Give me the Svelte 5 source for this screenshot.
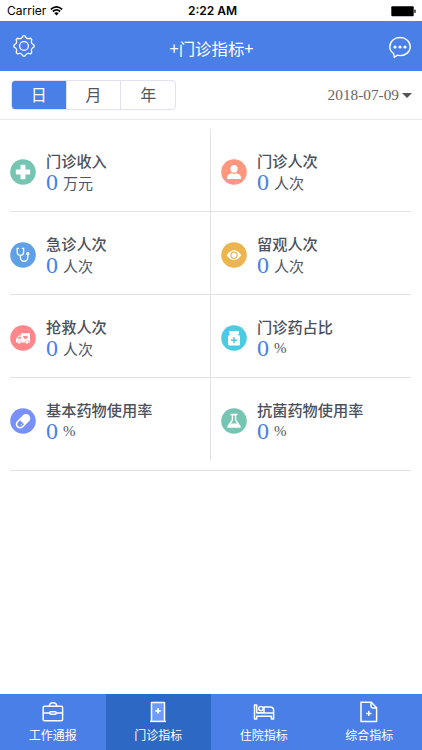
<script>
  const metrics = [
    { label: '门诊收入', unit: '万元', color: '#76c5b3', icon: 'plus' },
    { label: '门诊人次', unit: '人次', color: '#ff977f', icon: 'person' },
    { label: '急诊人次', unit: '人次', color: '#5fa1e8', icon: 'stethoscope' },
    { label: '留观人次', unit: '人次', color: '#edb54f', icon: 'eye' },
    { label: '抢救人次', unit: '人次', color: '#ff868b', icon: 'ambulance' },
    { label: '门诊药占比', unit: '%', color: '#4acbe2', icon: 'bottle' },
    { label: '基本药物使用率', unit: '%', color: '#7790fc', icon: 'pill' },
    { label: '抗菌药物使用率', unit: '%', color: '#76c5b3', icon: 'flask' }
  ];
  const periods = ['日', '月', '年'];
  const tabs = [
    { label: '工作通报', icon: 'case' },
    { label: '门诊指标', icon: 'door' },
    { label: '住院指标', icon: 'bed' },
    { label: '综合指标', icon: 'file' }
  ];
  let period = $state('日');
  let active = $state('门诊指标');

  // Outline of the eight-toothed gear, centred on 12,12.
  const teeth = Array.from({ length: 8 }, (_, i) => {
    const at = (r, deg) => {
      const a = ((i * 45 + deg) * Math.PI) / 180;
      return `${(12 + r * Math.sin(a)).toFixed(2)} ${(12 - r * Math.cos(a)).toFixed(2)}`;
    };
    return `${i ? 'L' : 'M'}${at(10.1, -5)}L${at(10.1, 5)}L${at(8.8, 13)}Q${at(7.6, 22.5)} ${at(8.8, 32)}`;
  }).join('') + 'Z';
</script>

<div class="app">
  <div class="status">
    <div class="carrier">
      <span>Carrier</span>
      <svg width="13" height="10" viewBox="0 0 13 10" fill="none" stroke="#000" stroke-width="1.7">
        <path d="M.8 3.3Q6.5-1.5 12.2 3.3M2.8 5.5Q6.5 2.4 10.2 5.5" />
        <path d="M4.2 7.1Q6.5 5.3 8.8 7.1L6.5 9.5Z" fill="#000" stroke="none" />
      </svg>
    </div>
    <b>2:22 AM</b>
    <div class="power">
      <svg width="25" height="11" viewBox="0 0 25 11">
        <rect x=".3" y=".3" width="22.4" height="10" rx="1" />
        <path d="M23.4 3.5h.6q.6 0 .6.8v2q0 .8-.6.8h-.6z" />
      </svg>
    </div>
  </div>

  <header>
    <svg class="gear" width="24" height="24" viewBox="0 0 24 24" fill="none" stroke="#fff" stroke-width="1.3" stroke-linejoin="round">
      <path d={teeth} />
      <circle cx="12" cy="12" r="4.4" />
    </svg>
    <h1>+门诊指标+</h1>
    <svg class="chat" width="24" height="24" viewBox="0 0 24 24" fill="none" stroke="#fff" stroke-width="1.4" stroke-linejoin="round">
      <path d="M5.6 18.5C3.2 16.8 1.8 14.5 1.8 11.7C1.8 6.5 6.2 2.5 12 2.5S22.2 6.5 22.2 11.7S17.7 20.6 12 20.6Q10.6 20.6 9.3 20.2L6.3 22.4Z" />
      <g fill="#fff" stroke="none"><circle cx="7" cy="12" r="1.6" /><circle cx="12" cy="12" r="1.6" /><circle cx="17" cy="12" r="1.6" /></g>
    </svg>
  </header>

  <div class="filter">
    <div class="segments">
      {#each periods as p}
        <button class:on={p === period} onclick={() => (period = p)}>{p}</button>
      {/each}
    </div>
    <div class="date"><span>2018-07-09</span><i></i></div>
  </div>

  <main>
    {#each metrics as m}
      <section class="cell">
        <svg class="badge" width="26" height="26" viewBox="0 0 26 26">
          <circle cx="13" cy="13" r="12.8" fill={m.color} />
          {#if m.icon === 'plus'}
            <path d="M11.4 5.8h3.2q.9 0 .9.9v3.8h3.8q.9 0 .9.9v3.2q0 .9-.9.9h-3.8v3.8q0 .9-.9.9h-3.2q-.9 0-.9-.9v-3.8H6.7q-.9 0-.9-.9v-3.2q0-.9.9-.9h3.8V6.7q0-.9.9-.9z" fill="#fff" />
          {:else if m.icon === 'person'}
            <ellipse cx="13" cy="9.8" rx="3.6" ry="3.9" fill="#fff" />
            <path d="M6 20v-1.7c0-2.3 2.5-3.7 4.7-4q2.3 1.3 4.6 0c2.2.3 4.7 1.7 4.7 4V20z" fill="#fff" />
          {:else if m.icon === 'stethoscope'}
            <g fill="none" stroke="#fff" stroke-width="1.3" stroke-linecap="round">
              <path d="M8.4 6.4H7.2v3.7a3.2 3.2 0 0 0 6.4 0V6.4h-1.2M10.4 13.4v2.2a3.7 3.7 0 0 0 7.4 0v-2.7" />
              <circle cx="17.8" cy="11.7" r="1" />
            </g>
          {:else if m.icon === 'eye'}
            <path d="M5.7 13.2Q9 8.3 13 8.3t7.3 4.9Q17 18.1 13 18.1t-7.3-4.9z" fill="#fff" />
            <circle cx="13" cy="13.2" r="3.1" fill="#fff" stroke={m.color} stroke-width="1.2" />
          {:else if m.icon === 'ambulance'}
            <path d="M11 8.2h9v9.3H6v-3.4l2.8-3.5H11z" fill="#fff" />
            <path d="M7.5 13.7l1.7-2.1h1.6v2.1zM15.5 14.6l-2.1-2c-.9-1.1.4-2.4 1.5-1.5l.6.5.6-.5c1.1-.9 2.4.4 1.5 1.5z" fill={m.color} />
            <circle cx="9.2" cy="17.3" r="1.7" fill="#fff" stroke={m.color} stroke-width=".5" />
            <circle cx="17" cy="17.3" r="1.7" fill="#fff" stroke={m.color} stroke-width=".5" />
          {:else if m.icon === 'bottle'}
            <rect x="8" y="6" width="10" height="3.2" rx=".6" fill="#fff" />
            <path d="M9 9h8v2H9z" fill="#fff" />
            <rect x="7" y="10.3" width="12" height="10.2" rx="1.3" fill="#fff" />
            <path d="M13 12.2v6M10 15.2h6" stroke={m.color} stroke-width="1.6" />
          {:else if m.icon === 'pill'}
            <g transform="rotate(-45 13 13.3)">
              <rect x="4.5" y="9" width="17" height="8.6" rx="4.3" fill="#fff" />
              <path d="M11.8 10.5H9a2.8 2.8 0 0 0 0 5.6h2.8z" fill={m.color} />
              <path d="M8.6 14.4h1.8" stroke="#fff" stroke-width=".8" />
            </g>
          {:else}
            <path d="M9.4 5.8h7.2v1.4h-1.3v4.6l4.3 6.5q.8 1.5-.8 1.5H7.2q-1.6 0-.8-1.5l4.3-6.5V7.2H9.4z" fill="#fff" />
            <path d="M12.1 7.4h1.8v4.8l2 3.2h-5.8l2-3.2z" fill={m.color} />
          {/if}
        </svg>
        <div class="info">
          <div class="label">{m.label}</div>
          <div class="value"><span class="num">0</span><span class="unit" class:percent={m.unit === '%'}>{m.unit}</span></div>
        </div>
      </section>
    {/each}
  </main>

  <nav>
    {#each tabs as t}
      <button class:active={t.label === active} onclick={() => (active = t.label)}>
        <svg width="22" height="22" viewBox="0 0 22 22" fill="none" stroke="#fff" stroke-width="1.5" stroke-linejoin="round">
          {#if t.icon === 'case'}
            <rect x="1.2" y="5.2" width="19.4" height="14.6" rx="1.3" />
            <path d="M7.4 5Q7.5 1.8 11 1.8T14.6 5M1.5 12h6.2M14.3 12h6.2" />
            <rect x="7.7" y="10.7" width="6.6" height="2.6" rx="1.2" />
          {:else if t.icon === 'door'}
            <path d="M4.5 20V1.4h13V20" fill="#6d9cf7" />
            <path d="M3 20.4h16" />
            <path d="M11 7.2v5.4M8.3 9.9h5.4" stroke-width="1.8" />
          {:else if t.icon === 'bed'}
            <path d="M1.5 4v14h2.2v-2.7h14.7V18h2.2V9.2Q20.6 5.9 17 5.9H11v5.9H3.7V4zM3.7 12h16.6" />
            <circle cx="8" cy="7.6" r="2.2" />
          {:else}
            <path d="M3 1.3h10.3l5.3 5.4v13.9H3zM13 1.5v3.7q0 1.7 1.7 1.7h3.7M10.8 9.7v5.4M8.1 12.4h5.4" />
          {/if}
        </svg>
        <span>{t.label}</span>
      </button>
    {/each}
  </nav>
</div>

<style>
  .app {
    width: 422px;
    height: 750px;
    display: flex;
    flex-direction: column;
    overflow: hidden;
    background: #fff;
    font-family: "Liberation Serif", "Noto Sans CJK SC", serif;
    color: #505663;
  }
  button { border: 0; margin: 0; padding: 0; background: none; font: inherit; color: inherit; }
  svg { display: block; flex: none; }
  .status {
    height: 21px;
    flex: none;
    display: flex;
    align-items: center;
    padding: 1px 6px 0 7px;
    box-sizing: border-box;
    font: 12px/20px Inter, sans-serif;
    color: #000;
  }
  .carrier, .power { flex: 1; display: flex; align-items: center; }
  .carrier { gap: 4px; }
  .power { justify-content: flex-end; }
  .status b { font-weight: 600; padding-left: 2px; }
  header {
    height: 50px;
    flex: none;
    display: flex;
    align-items: center;
    justify-content: space-between;
    padding: 0 10px 0 12px;
    background: #497fe7;
    color: #fff;
  }
  .gear { margin-bottom: 1px; }
  .chat { margin-top: 1px; }
  h1 { margin: 4px 0 0; font: 400 16.4px/24px "Noto Sans CJK SC", sans-serif; padding-right: 1px; }
  .filter {
    height: 49px;
    flex: none;
    box-sizing: border-box;
    display: flex;
    align-items: center;
    justify-content: space-between;
    padding: 0 10px 0 11px;
    border-bottom: 1px solid #e9e9eb;
  }
  .segments {
    display: flex;
    width: 165px;
    height: 30px;
    box-sizing: border-box;
    border: 1px solid #e3e1f0;
    border-radius: 4px;
    overflow: hidden;
  }
  .segments button { flex: 1; font: 16px/27px "Noto Sans CJK SC", sans-serif; padding-bottom: 1px; }
  .segments button + button { border-left: 1px solid #e3e1f0; }
  .segments .on { background: #497fe7; color: #fff; }
  .date { display: flex; align-items: center; gap: 3px; font-size: 15.3px; color: #666; }
  .date i { border: 5px solid transparent; border-top-color: #555; border-bottom: 0; }
  main {
    display: grid;
    grid-template-columns: 200px 201px;
    grid-template-rows: 83px 83px 83px 83px;
    margin: 9px 11px 0 10px;
    padding-bottom: 9px;
    border-bottom: 1px solid #e2e2e4;
  }
  .cell {
    display: flex;
    align-items: flex-start;
    gap: 10px;
    box-sizing: border-box;
    border-bottom: 1px solid #e2e2e4;
    padding-top: 21px;
  }
  .cell:nth-child(even) { border-left: 1px solid #e2e2e4; padding-left: 10px; }
  .cell:nth-last-child(-n+2) { border-bottom: 0; }
  .badge { margin-top: 9px; }
  .label { font: 500 15.2px/20px "Noto Sans CJK SC", sans-serif; color: #4b515c; }
  .value { display: flex; align-items: center; gap: 5px; height: 25px; }
  .num { font-size: 24px; line-height: 25px; color: #497fe7; }
  .unit { font: 15px/25px "Noto Sans CJK SC", sans-serif; }
  .percent { font: 15px/25px "Liberation Serif", serif; }
  nav { margin-top: auto; height: 56px; flex: none; display: flex; background: #497fe7; color: #fff; }
  nav button { flex: 1; display: flex; flex-direction: column; align-items: center; padding-top: 7px; }
  nav .active { background: #2e68c5; }
  nav span { font: 12px/18px "Noto Sans CJK SC", sans-serif; margin-top: 3px; }
</style>
